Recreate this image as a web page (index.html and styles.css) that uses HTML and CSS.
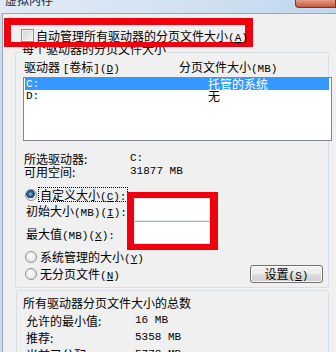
FILE: index.html
```html
<!DOCTYPE html>
<html lang="zh-CN">
  <head>
    <meta charset="UTF-8" />
    <title>虚拟内存</title>
    <link rel="stylesheet" href="styles.css">
  </head>
  <body>
    <div class="titlebar">
      <span class="title">虚拟内存</span>
      <span class="close"></span>
    </div>
    <div class="frame">
      <div class="client">
        <div class="mark auto-mark">
          <div class="check-row">
            <span class="checkbox"></span>
            <span>自动管理所有驱动器的分页文件大小<span class="latin">(<u>A</u>)</span></span>
          </div>
        </div>

        <div class="group per-drive">
          <div class="group-title">每个驱动器的分页文件大小</div>
          <div class="list-head">
            <span class="col-drive">驱动器 <span class="latin">[</span>卷标<span class="latin">](<u>D</u>)</span></span>
            <span>分页文件大小<span class="latin">(MB)</span></span>
          </div>
          <div class="listbox">
            <div class="list-row selected"><span class="col-drive latin">C:</span><span>托管的系统</span></div>
            <div class="list-row"><span class="col-drive latin">D:</span><span>无</span></div>
          </div>

          <div class="info">
            <div class="info-row"><span class="info-key">所选驱动器:</span><span class="latin">C:</span></div>
            <div class="info-row"><span class="info-key">可用空间:</span><span class="latin">31877 MB</span></div>
          </div>

          <div class="custom">
            <div class="custom-labels">
              <div class="radio-row">
                <span class="radio checked"></span>
                <span class="focus-label">自定义大小<span class="latin">(<u>C</u>):</span></span>
              </div>
              <div class="field-label">初始大小<span class="latin">(MB)(<u>I</u>):</span></div>
              <div class="field-label second">最大值<span class="latin">(MB)(<u>X</u>):</span></div>
            </div>
            <div class="mark fields-mark">
              <div class="field-input"></div>
              <div class="field-input"></div>
            </div>
          </div>

          <div class="options">
            <div class="option-list">
              <div class="radio-row plain">
                <span class="radio"></span>
                <span class="radio-text">系统管理的大小<span class="latin">(<u>Y</u>)</span></span>
              </div>
              <div class="radio-row plain">
                <span class="radio"></span>
                <span class="radio-text">无分页文件<span class="latin">(<u>N</u>)</span></span>
              </div>
            </div>
            <div class="button">设置<span class="latin">(<u>S</u>)</span></div>
          </div>
        </div>

        <div class="group totals">
          <div class="totals-title">所有驱动器分页文件大小的总数</div>
          <div class="total-row"><span class="total-key">允许的最小值:</span><span class="latin">16 MB</span></div>
          <div class="total-row"><span class="total-key">推荐:</span><span class="latin">5358 MB</span></div>
          <div class="total-row"><span class="total-key">当前已分配:</span><span class="latin">5778 MB</span></div>
        </div>
      </div>
    </div>
  </body>
</html>
```

FILE: styles.css
```css
* {
  box-sizing: border-box;
}

body {
  margin: 0;
  width: 336px;
  height: 352px;
  overflow: hidden;
  background-color: #f0f0f0;
  font-family: "Noto Sans CJK SC", sans-serif;
  font-size: 12px;
  line-height: 13px;
  color: #000;
  white-space: nowrap;
}

/* ASCII runs: narrow monospace, like the dialog's bitmap font.
   line-height 0 so the other font doesn't stretch the line box */
.latin {
  font-family: "Liberation Mono", monospace;
  font-size: 11px;
  line-height: 0;
}

u {
  text-decoration: underline;
}

/* window chrome */
.titlebar {
  display: flex;
  height: 13px;
  overflow: hidden;
  background: linear-gradient(to right, #e1eaf4, #d3e2f1 50%, #bfd7ee);
}

.title {
  margin: -7px 0 0 5px;
  color: #1e2b3a;
}

.close {
  margin-left: auto;
  width: 41px;
  height: 8px;
  border: 1px solid #7c3328;
  border-top: none;
  border-radius: 0 0 0 4px;
  background: linear-gradient(#e49c88, #c8573f);
}

.frame {
  padding-left: 2px;
  background-color: #cddced;
}

.client {
  height: 339px;
  overflow: hidden;
  background-color: #f0f0f0;
  border-top: 1px solid #9aa6b3;
  border-left: 1px solid #9aa6b3;
}

/* red highlight frames */
.mark {
  position: relative;
  z-index: 2;
  border-style: solid;
  border-color: #f0000c;
}

.auto-mark {
  width: 249px;
  margin: 4px 0 0 1px;
  border-width: 7px 8px 5px 7px;
}

.check-row {
  display: flex;
  align-items: flex-start;
  height: 17px;
  padding: 4px 0 0 10px;
}

.checkbox {
  flex: none;
  width: 13px;
  height: 13px;
  margin-right: 2px;
  border: 1px solid #8e8f8f;
  background: linear-gradient(135deg, #d4d4d4, #f4f4f4);
  box-shadow: inset 0 0 0 1px #f4f4f4;
}

/* group boxes */
.group {
  border: 1px solid #d5dfe5;
  border-radius: 3px;
}

.per-drive {
  margin: 5px 7px 0 12px;
  padding: 0 0 4px 8px;
}

.group-title {
  width: fit-content;
  margin: -11px 0 0 -3px;
  padding: 0 1px;
  background-color: #f0f0f0;
}

.list-head {
  display: flex;
  height: 13px;
  margin-top: 5px;
}

.list-head .col-drive {
  width: 155px;
}

.listbox {
  height: 64px;
  margin: 4px -4px 0 -1px;
  border: 1px solid #828790;
  background-color: #fff;
}

.list-row {
  display: flex;
  height: 12px;
  margin: 0 2px 0 1px;
  padding-left: 1px;
  line-height: 12px;
}

.list-row .col-drive {
  width: 182px;
  line-height: 12px;
}

.list-row.selected {
  background-color: #3399ff;
  color: #fff;
}

.info {
  margin-top: 11px;
}

.info-row {
  display: flex;
  height: 13px;
}

.info-row .latin {
  line-height: 13px;
}

.info-key {
  width: 106px;
}

.custom {
  display: flex;
  margin-top: 9px;
}

.custom-labels {
  width: 103px;
}

.radio-row {
  display: flex;
  align-items: center;
  height: 15px;
}

.radio {
  flex: none;
  width: 12px;
  height: 12px;
  margin-left: 1px;
  border: 1px solid #8e8f8f;
  border-radius: 50%;
  background: radial-gradient(circle at 45% 40%, #ffffff, #d8d8d8);
}

.radio.checked {
  background: radial-gradient(circle at 45% 40%, #9fd0f0 0, #2c6fa8 2px, #173f6e 4px, #e8e8e8 4.5px, #f6f6f6 6px);
}

.focus-label {
  margin-left: 1px;
  padding: 0 1px;
  border: 1px dotted #000;
}

.field-label {
  height: 13px;
  margin-top: 2px;
  padding-left: 2px;
}

.field-label.second {
  margin-top: 10px;
}

.fields-mark {
  margin-top: 5px;
  border-width: 6px 8px 6px 7px;
}

.field-input {
  width: 76px;
  height: 23px;
  border: 1px solid #e3e9ef;
  border-top-color: #abadb3;
  background-color: #fff;
}

.field-input:first-child {
  border-top-color: #e3e9ef;
}

.options {
  display: flex;
}

.radio-row.plain {
  height: 13px;
}

.radio-row.plain + .radio-row.plain {
  margin-top: 4px;
}

.radio-text {
  margin-left: 3px;
}

.button {
  width: 73px;
  height: 18px;
  margin: 15px 5px 0 auto;
  border: 1px solid #707070;
  border-radius: 3px;
  background: linear-gradient(#f2f2f2 0%, #ebebeb 50%, #dddddd 50%, #cfcfcf 100%);
  box-shadow: inset 0 0 0 1px #fbfbfb;
  text-align: center;
  line-height: 16px;
}

.totals {
  margin: 2px 7px 0 13px;
  padding: 0 0 10px 6px;
}

.totals-title {
  margin-top: 5px;
}

.total-row {
  display: flex;
  height: 13px;
  margin-top: 4px;
  padding-left: 3px;
}

.total-row .latin {
  line-height: 13px;
}

.totals-title + .total-row {
  margin-top: 5px;
}

.total-key {
  width: 109px;
}
```
